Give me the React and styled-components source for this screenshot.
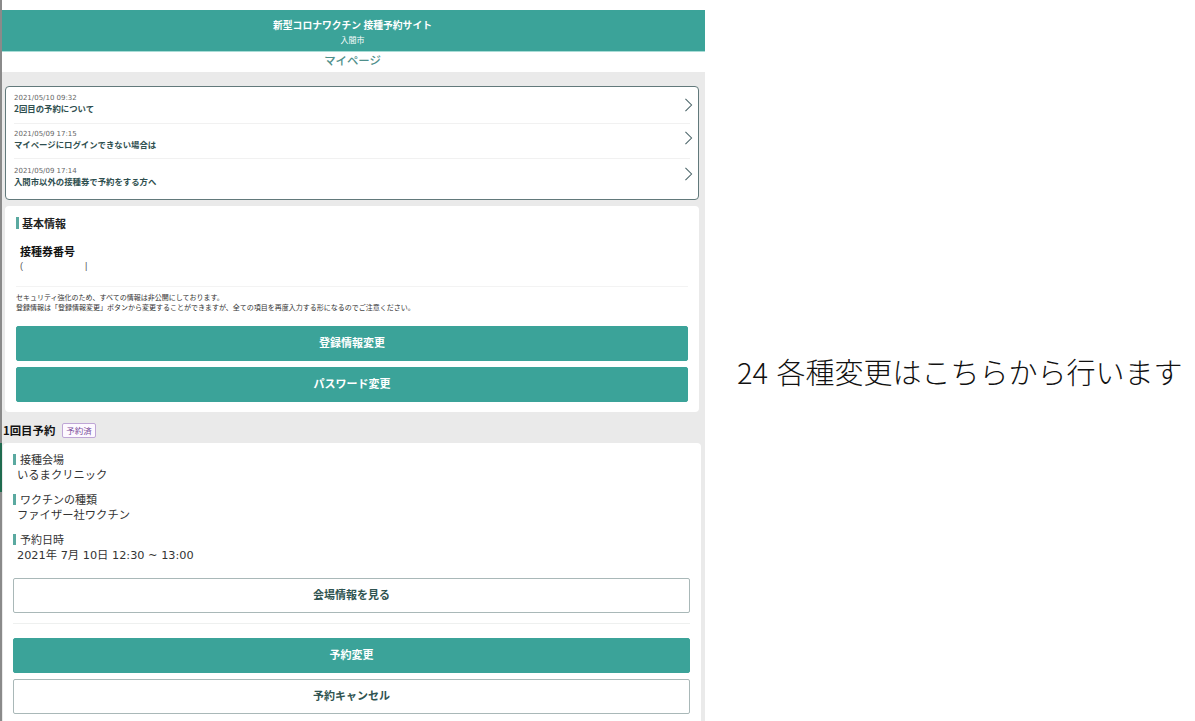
import React from 'react';
import styled, { createGlobalStyle } from 'styled-components';

const GlobalStyle = createGlobalStyle`
  html, body { margin: 0; padding: 0; height: 100%; overflow: hidden; background: #fff; }
  body { font-family: "Noto Sans CJK JP", "Liberation Sans", sans-serif; color: #222; }
  * { box-sizing: border-box; }
`;

const news = [
  { date: '2021/05/10 09:32', title: '2回目の予約について', height: 37, arrowLift: 0 },
  { date: '2021/05/09 17:15', title: 'マイページにログインできない場合は', height: 35, arrowLift: 6 },
  { date: '2021/05/09 17:14', title: '入間市以外の接種券で予約をする方へ', height: 40, arrowLift: 10 },
];

const details = [
  { label: '接種会場', value: 'いるまクリニック' },
  { label: 'ワクチンの種類', value: 'ファイザー社ワクチン' },
  { label: '予約日時', value: '2021年 7月 10日 12:30 ~ 13:00' },
];

const Chevron = ({ lift }) => (
  <ChevronIcon $lift={lift} viewBox="0 0 10 16" fill="none" stroke="#4a6468" strokeWidth="1.2">
    <path d="M1.5 1 L8.5 8 L1.5 15" />
  </ChevronIcon>
);

const App = () => {
  return (
    <Page>
      <GlobalStyle />
      <Phone>
        <Header>
          <SiteTitle>新型コロナワクチン 接種予約サイト</SiteTitle>
          <City>入間市</City>
        </Header>
        <PageTitle>マイページ</PageTitle>
        <Content>
          <NewsCard>
            {news.map((item) => (
              <NewsRow key={item.date} $height={item.height}>
                <NewsText>
                  <NewsDate>{item.date}</NewsDate>
                  <NewsTitle>{item.title}</NewsTitle>
                </NewsText>
                <Chevron lift={item.arrowLift} />
              </NewsRow>
            ))}
          </NewsCard>

          <InfoCard>
            <SectionTitle>基本情報</SectionTitle>
            <TicketLabel>接種券番号</TicketLabel>
            <TicketValue>
              <span>(</span>
              <span>|</span>
            </TicketValue>
            <Notice>
              セキュリティ強化のため、すべての情報は非公開にしております。
              <br />
              登録情報は「登録情報変更」ボタンから変更することができますが、全ての項目を再度入力する形になるのでご注意ください。
            </Notice>
            <ButtonStack>
              <Button>登録情報変更</Button>
              <Button>パスワード変更</Button>
            </ButtonStack>
          </InfoCard>

          <ReserveHeading>
            1回目予約
            <Badge>予約済</Badge>
          </ReserveHeading>

          <ReserveCard>
            {details.map((item) => (
              <Detail key={item.label}>
                <DetailLabel>{item.label}</DetailLabel>
                <DetailValue>{item.value}</DetailValue>
              </Detail>
            ))}
            <Button $outline>会場情報を見る</Button>
            <Divider />
            <ButtonStack>
              <Button>予約変更</Button>
              <Button $outline>予約キャンセル</Button>
            </ButtonStack>
          </ReserveCard>
        </Content>
      </Phone>
      <Note>24 各種変更はこちらから行います</Note>
    </Page>
  );
};

const Page = styled.div`
  display: flex;
  width: 1195px;
  height: 721px;
  overflow: hidden;
`;

const Phone = styled.div`
  position: relative;
  flex: 0 0 705px;
  padding-top: 10px;
  display: flex;
  flex-direction: column;

  /* window edge lying over the page, green where the next window shows through */
  &::before {
    content: "";
    position: absolute;
    top: 0;
    bottom: 0;
    left: 0;
    width: 2px;
    background: linear-gradient(
      #8a8a8a 443px,
      #1f6b4f 443px,
      #1f6b4f 492px,
      #8a8a8a 492px
    );
  }
`;

const Header = styled.header`
  flex: none;
  height: 42px;
  background: #3ba399;
  border-bottom: 1px solid #a9dcd6;
  color: #fff;
  text-align: center;
  padding-top: 8px;
`;

const SiteTitle = styled.div`
  font-size: 9.8px;
  line-height: 14px;
  font-weight: 700;
`;

const City = styled.div`
  font-size: 8px;
  line-height: 13px;
  margin-top: 1px;
`;

const PageTitle = styled.div`
  flex: none;
  height: 20px;
  font-size: 11.4px;
  line-height: 17px;
  font-weight: 500;
  color: #4f8f8b;
  text-align: center;
  background: #fff;
`;

const Content = styled.main`
  flex: 1 0 auto;
  background: #eaeaea;
  padding: 14px 6px 0 5px;
`;

const NewsCard = styled.section`
  height: 114px;
  background: #fff;
  border: 1px solid #62797b;
  border-radius: 4px;
  padding: 0 8px;
`;

const NewsRow = styled.div`
  height: ${(p) => p.$height}px;
  display: flex;
  align-items: center;
  justify-content: space-between;
  border-bottom: 1px solid #f1f1f1;
  &:last-child { border-bottom: 0; }
`;

const NewsText = styled.div`
  padding-bottom: 4px;
  ${NewsRow}:last-child & { padding-bottom: 6px; }
`;

const NewsDate = styled.div`
  font-size: 7px;
  line-height: 10px;
  color: #666;
  font-family: "DejaVu Sans", sans-serif;
`;

const NewsTitle = styled.div`
  font-size: 8.4px;
  line-height: 11px;
  font-weight: 700;
  color: #2f4f4f;
`;

const ChevronIcon = styled.svg`
  width: 9px;
  height: 14px;
  margin-right: -3px;
  margin-bottom: ${(p) => p.$lift}px;
`;

const InfoCard = styled.section`
  height: 206px;
  margin-top: 6px;
  background: #fff;
  border-radius: 4px;
  padding: 11px 11px 0 11px;
`;

const SectionTitle = styled.h2`
  margin: 0;
  padding-left: 3px;
  border-left: 3px solid #5aa9a0;
  font-size: 11px;
  line-height: 12px;
  font-weight: 700;
  color: #222;
`;

const TicketLabel = styled.div`
  margin: 15px 0 0 4px;
  font-size: 11px;
  line-height: 15px;
  font-weight: 700;
  color: #111;
`;

const TicketValue = styled.div`
  display: flex;
  gap: 62px;
  height: 28px;
  padding-left: 4px;
  font-size: 9px;
  line-height: 15px;
  color: #555;
  font-family: "Liberation Sans", sans-serif;
  border-bottom: 1px solid #f3f3f3;
`;

const Notice = styled.p`
  margin: 5px 0 14px;
  font-size: 7px;
  line-height: 10px;
  color: #333;
`;

const ButtonStack = styled.div`
  display: flex;
  flex-direction: column;
  gap: 6px;
`;

const Button = styled.button`
  display: block;
  width: 100%;
  height: 35px;
  border-radius: 2px;
  border: 1px solid ${(p) => (p.$outline ? '#a9b8b8' : '#3ba399')};
  background: ${(p) => (p.$outline ? '#fff' : '#3ba399')};
  color: ${(p) => (p.$outline ? '#2f5350' : '#fff')};
  font-family: inherit;
  font-size: 11px;
  font-weight: 700;
  padding: 0 0 4px;
`;

const ReserveHeading = styled.div`
  display: flex;
  align-items: center;
  height: 31px;
  padding-top: 5px;
  margin-left: -2px;
  font-size: 11.4px;
  font-weight: 700;
  color: #111;
`;

const Badge = styled.span`
  margin-left: 7px;
  height: 15px;
  padding: 0 3px;
  border: 1px solid #bfa6d6;
  border-radius: 2px;
  font-size: 8.5px;
  line-height: 13px;
  font-weight: 400;
  color: #7c4f9c;
  background: #fdf9ff;
`;

const ReserveCard = styled.section`
  margin: 0 -2px;
  height: 290px;
  background: #fff;
  border-radius: 4px;
  padding: 10px 11px 0 10px;
`;

const Detail = styled.div`
  margin-bottom: 11px;
  &:nth-of-type(3) { margin-bottom: 15px; }
`;

const DetailLabel = styled.div`
  padding-left: 4px;
  border-left: 3px solid #5aa9a0;
  font-size: 11px;
  line-height: 11px;
  margin-top: 1px;
  color: #333;
`;

const DetailValue = styled.div`
  margin: 3px 0 0 4px;
  font-family: "DejaVu Sans", "Noto Sans CJK JP", sans-serif;
  font-size: 11.3px;
  line-height: 15px;
  color: #333;
`;

const Divider = styled.hr`
  margin: 10px 0 14px;
  border: 0;
  border-top: 1px solid #eef0ef;
`;

const Note = styled.div`
  flex: 1;
  align-self: center;
  padding: 0 0 0 32px;
  margin-top: 21px;
  font-size: 29px;
  line-height: 32px;
  font-weight: 300;
  word-spacing: 2px;
  white-space: nowrap;
  color: #111;
`;

export default App;
